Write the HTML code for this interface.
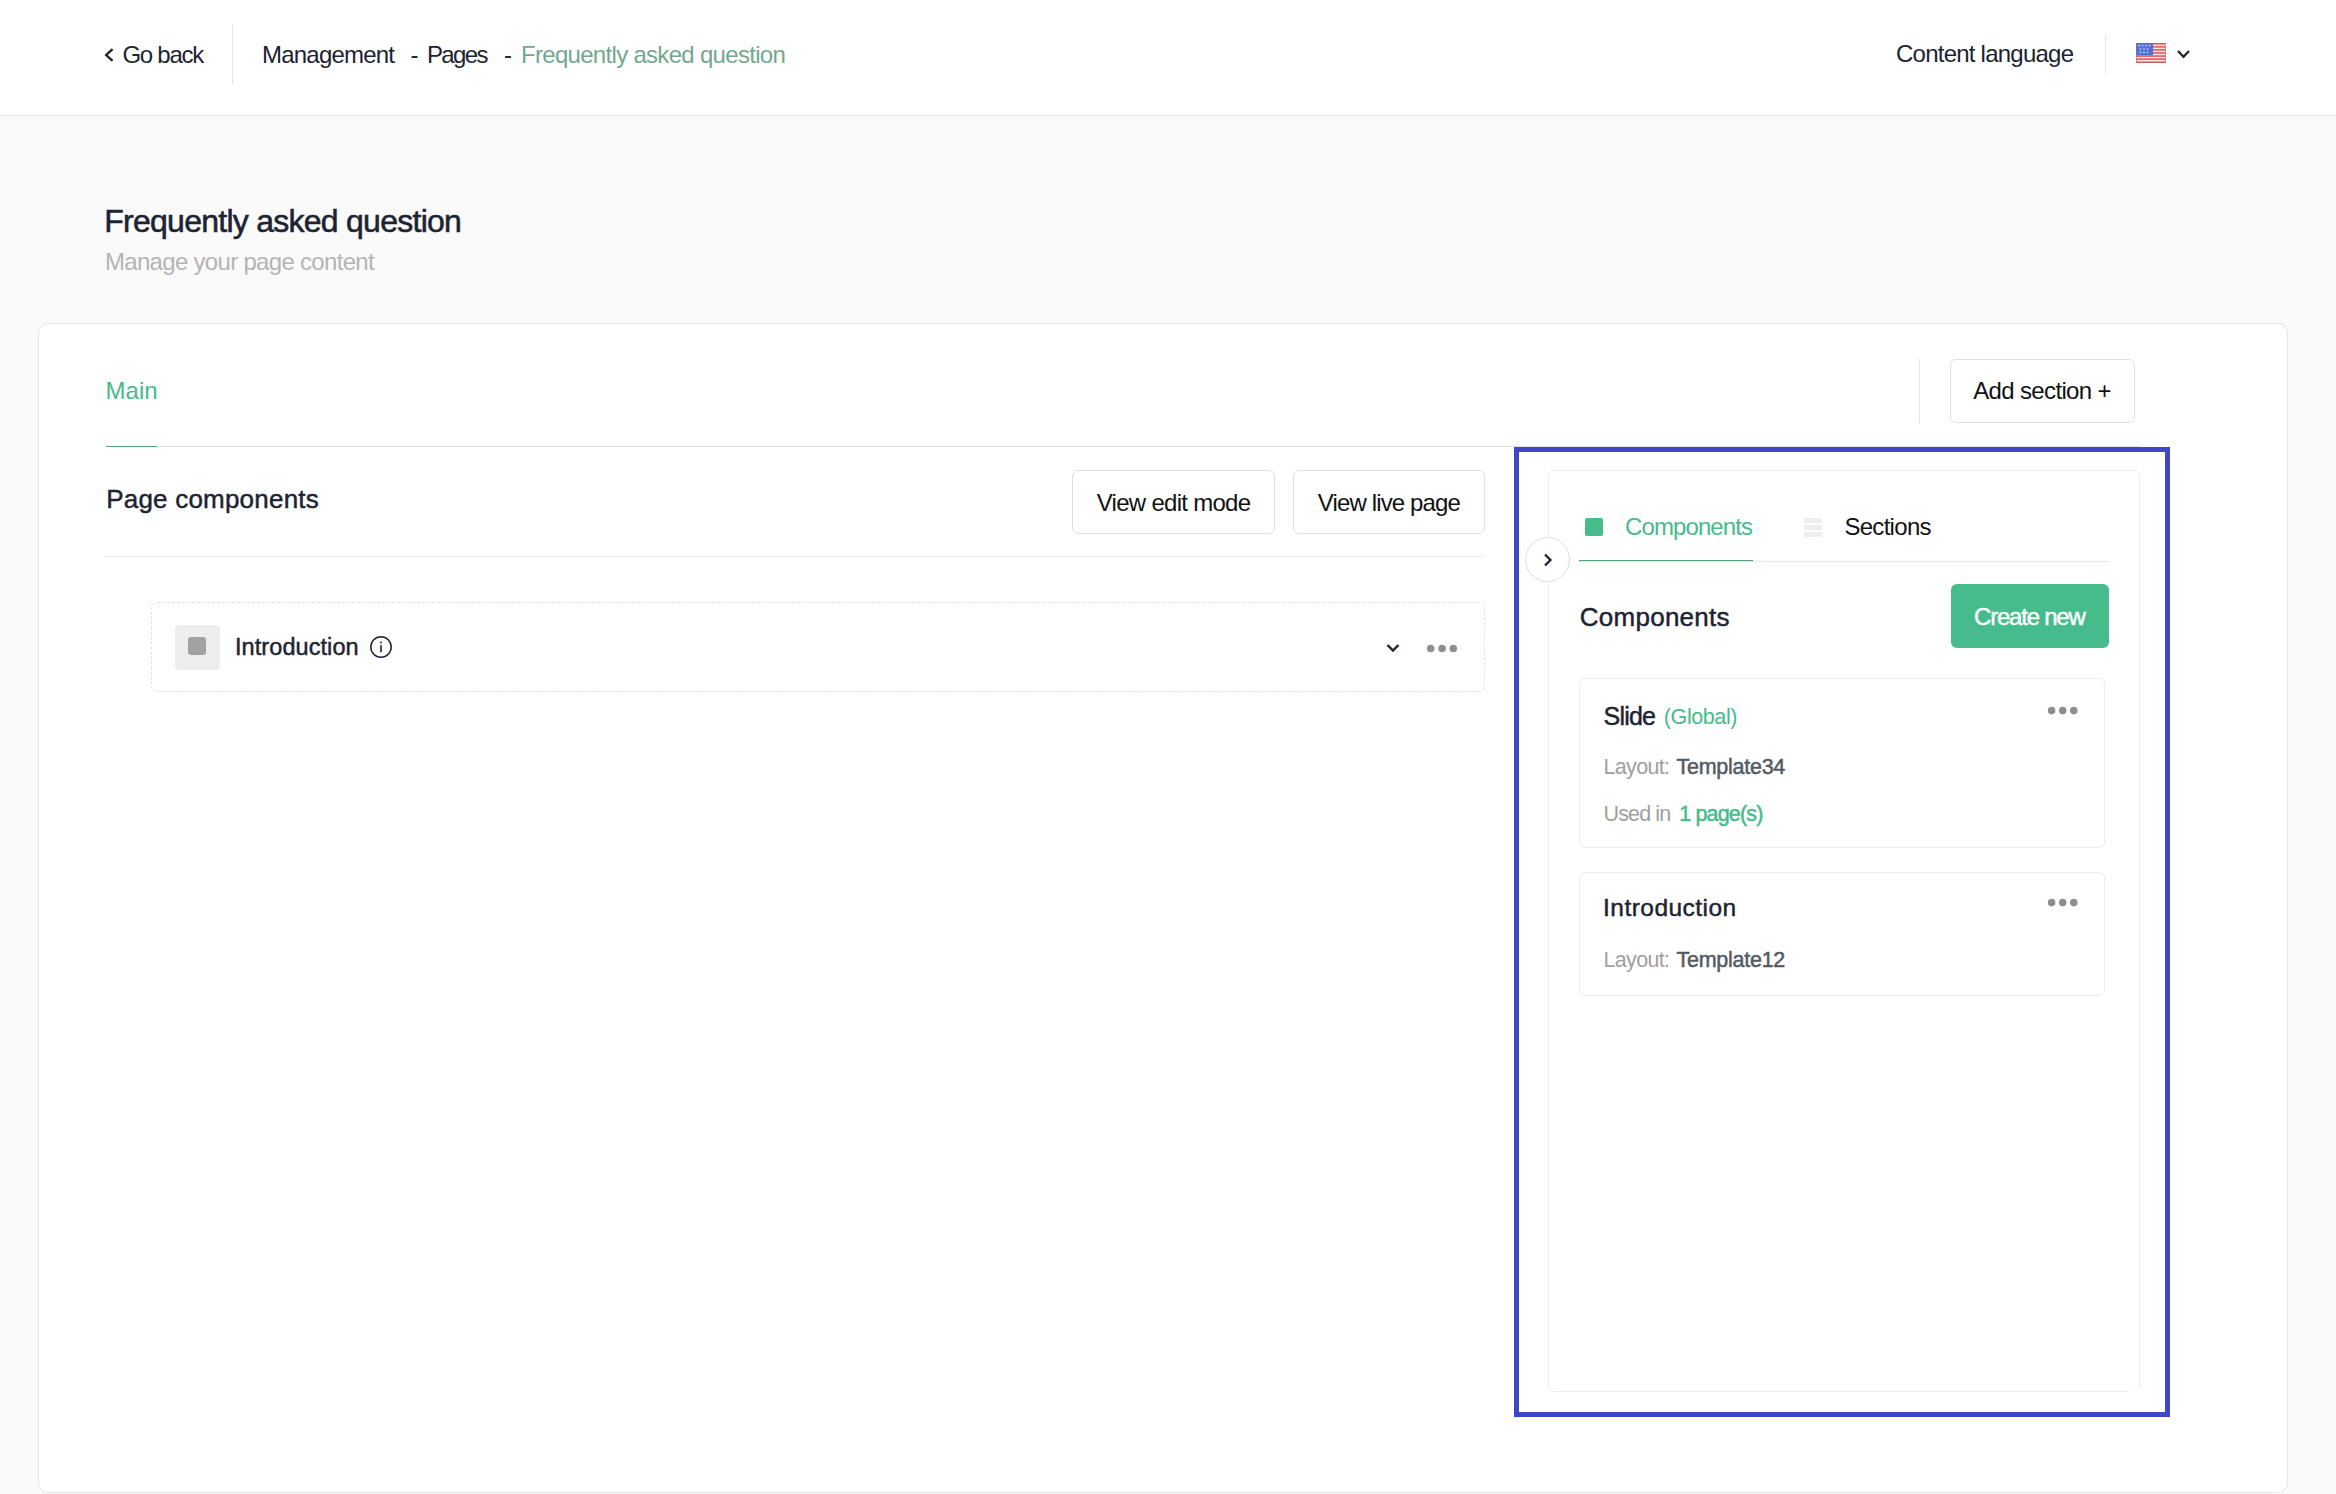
<!DOCTYPE html>
<html><head><meta charset="utf-8">
<style>
html,body{margin:0;padding:0;}
body{width:2336px;height:1494px;overflow:hidden;position:relative;background:#fafafa;font-family:"Liberation Sans",sans-serif;}
.t{position:absolute;white-space:nowrap;}
.a{position:absolute;box-sizing:border-box;}
</style></head><body>
<!-- header -->
<div class="a" style="left:0;top:0;width:2336px;height:116px;background:#fff;border-bottom:1px solid #e4e4e4;"></div>
<svg class="a" style="left:100px;top:44px" width="18" height="22" viewBox="0 0 18 22"><path d="M12.6 5.2 L6.2 11 L12.6 16.8" fill="none" stroke="#1c2331" stroke-width="2.3"/></svg>
<div class="a" style="left:232px;top:24px;width:1px;height:60px;background:#e4e4e4;"></div>
<div class="a" style="left:2105px;top:35px;width:1px;height:38px;background:#e4e4e4;"></div>
<!-- flag -->
<svg class="a" style="left:2136px;top:43px" width="30" height="20" viewBox="0 0 30 20">
<rect x="0" y="0" width="30" height="20" fill="#fbe3e3"/>
<rect x="0" y="0.000" width="30" height="1.538" fill="#dc5a5a"/><rect x="0" y="3.077" width="30" height="1.538" fill="#dc5a5a"/><rect x="0" y="6.154" width="30" height="1.538" fill="#dc5a5a"/><rect x="0" y="9.231" width="30" height="1.538" fill="#dc5a5a"/><rect x="0" y="12.308" width="30" height="1.538" fill="#dc5a5a"/><rect x="0" y="15.385" width="30" height="1.538" fill="#dc5a5a"/><rect x="0" y="18.462" width="30" height="1.538" fill="#dc5a5a"/>
<rect x="0" y="0" width="17" height="12.3" fill="#4f72d6"/>
<circle cx="3" cy="2.5" r="0.85" fill="#cfe0ff"/><circle cx="6.5" cy="2.5" r="0.85" fill="#cfe0ff"/><circle cx="10" cy="2.5" r="0.85" fill="#cfe0ff"/><circle cx="13.5" cy="2.5" r="0.85" fill="#cfe0ff"/><circle cx="4.5" cy="6" r="0.85" fill="#cfe0ff"/><circle cx="8" cy="6" r="0.85" fill="#cfe0ff"/><circle cx="11.5" cy="6" r="0.85" fill="#cfe0ff"/><circle cx="4.5" cy="9.3" r="0.85" fill="#cfe0ff"/><circle cx="8" cy="9.3" r="0.85" fill="#cfe0ff"/><circle cx="11.5" cy="9.3" r="0.85" fill="#cfe0ff"/>
<rect x="0.4" y="0.4" width="29.2" height="19.2" fill="none" stroke="#9b6b6b" stroke-opacity="0.55" stroke-width="0.8"/>
</svg>
<svg class="a" style="left:2175px;top:47px" width="17" height="14" viewBox="0 0 17 14"><path d="M3 4 L8.5 9.8 L14 4" fill="none" stroke="#1c2331" stroke-width="2.2"/></svg>

<!-- main card -->
<div class="a" style="left:38px;top:323px;width:2250px;height:1170px;background:#fff;border:1px solid #e4e4e4;border-radius:10px;"></div>
<div class="a" style="left:106px;top:446px;width:2034px;height:1px;background:#e0e0e0;"></div>
<div class="a" style="left:106px;top:446px;width:51px;height:1px;background:#5a9e80;"></div>
<div class="a" style="left:1919px;top:359px;width:1px;height:64px;background:#e4e4e4;"></div>
<div class="a" style="left:1950px;top:359px;width:185px;height:64px;border:1px solid #e0e0e0;border-radius:6px;background:#fff;"></div>

<!-- page components -->
<div class="a" style="left:1072px;top:470px;width:203px;height:64px;border:1px solid #e0e0e0;border-radius:6px;background:#fff;"></div>
<div class="a" style="left:1293px;top:470px;width:192px;height:64px;border:1px solid #e0e0e0;border-radius:6px;background:#fff;"></div>
<div class="a" style="left:106px;top:556px;width:1379px;height:1px;background:#ececec;"></div>
<div class="a" style="left:151px;top:602px;width:1334px;height:90px;border:1px dashed #e2e2e2;border-radius:6px;"></div>
<div class="a" style="left:175px;top:625px;width:45px;height:45px;background:#ededed;border-radius:4px;"></div>
<div class="a" style="left:188px;top:637px;width:18px;height:18px;background:#a2a2a2;border-radius:3px;"></div>
<svg class="a" style="left:368px;top:634px" width="26" height="26" viewBox="0 0 26 26"><circle cx="13" cy="13" r="10.2" fill="none" stroke="#1c2331" stroke-width="1.5"/><rect x="12.2" y="11.2" width="1.6" height="7" fill="#1c2331"/><rect x="12.2" y="7.6" width="1.6" height="1.8" fill="#1c2331"/></svg>
<svg class="a" style="left:1384px;top:641px" width="18" height="14" viewBox="0 0 18 14"><path d="M3.5 4 L9 9.5 L14.5 4" fill="none" stroke="#1c2331" stroke-width="2.4"/></svg>
<svg class="a" style="left:1424px;top:642px" width="38" height="14" viewBox="0 0 38 14"><circle cx="6.7" cy="6.5" r="3.8" fill="#8f8f8f"/><circle cx="18.1" cy="6.5" r="3.8" fill="#8f8f8f"/><circle cx="29.3" cy="6.5" r="3.8" fill="#8f8f8f"/></svg>

<!-- right panel -->
<div class="a" style="left:1548px;top:470px;width:592px;height:922px;border:1px solid #ececec;border-radius:6px;background:#fff;"></div>
<div class="a" style="left:1525px;top:537px;width:45px;height:45px;border:1px solid #dedede;border-radius:50%;background:#fff;"></div>
<svg class="a" style="left:1538px;top:550px" width="20" height="20" viewBox="0 0 20 20"><path d="M7 4.5 L12.5 10 L7 15.5" fill="none" stroke="#1c2331" stroke-width="2.3"/></svg>
<div class="a" style="left:1584.8px;top:517.8px;width:18.6px;height:18.4px;background:#46bb8b;border-radius:2px;"></div>
<div class="a" style="left:1804px;top:518px;width:18px;height:4.5px;background:#eeeeee;"></div>
<div class="a" style="left:1804px;top:525px;width:18px;height:4.5px;background:#eeeeee;"></div>
<div class="a" style="left:1804px;top:532px;width:18px;height:4.5px;background:#eeeeee;"></div>
<div class="a" style="left:1579px;top:561px;width:530px;height:1px;background:#e6e6e6;"></div>
<div class="a" style="left:1579px;top:560px;width:174px;height:1px;background:#5a9e80;"></div>
<div class="a" style="left:1951px;top:584px;width:158px;height:64px;background:#46bb8b;border-radius:6px;"></div>

<div class="a" style="left:1579px;top:678px;width:526px;height:170px;border:1px solid #ececec;border-radius:6px;background:#fff;"></div>
<svg class="a" style="left:2044px;top:704px" width="38" height="14" viewBox="0 0 38 14"><circle cx="7.6" cy="6.6" r="3.8" fill="#8f8f8f"/><circle cx="18.7" cy="6.6" r="3.8" fill="#8f8f8f"/><circle cx="29.8" cy="6.6" r="3.8" fill="#8f8f8f"/></svg>
<div class="a" style="left:1579px;top:872px;width:526px;height:124px;border:1px solid #ececec;border-radius:6px;background:#fff;"></div>
<svg class="a" style="left:2044px;top:896px" width="38" height="14" viewBox="0 0 38 14"><circle cx="7.6" cy="6.6" r="3.8" fill="#8f8f8f"/><circle cx="18.7" cy="6.6" r="3.8" fill="#8f8f8f"/><circle cx="29.8" cy="6.6" r="3.8" fill="#8f8f8f"/></svg>

<div class="a" style="left:2129px;top:1388px;width:12px;height:5px;background:#fff;"></div>
<div class="t" style="left:122.40px;top:42.50px;font-size:24px;line-height:24px;letter-spacing:-1.250px;color:#1c2331;">Go back</div>
<div class="t" style="left:262.10px;top:42.50px;font-size:24px;line-height:24px;letter-spacing:-0.803px;color:#1c2331;">Management</div>
<div class="t" style="left:410.60px;top:42.50px;font-size:24px;line-height:24px;letter-spacing:0.000px;color:#1c2331;">-</div>
<div class="t" style="left:426.90px;top:42.50px;font-size:24px;line-height:24px;letter-spacing:-1.600px;color:#1c2331;">Pages</div>
<div class="t" style="left:504.00px;top:42.50px;font-size:24px;line-height:24px;letter-spacing:0.000px;color:#1c2331;">-</div>
<div class="t" style="left:521.00px;top:42.50px;font-size:24px;line-height:24px;letter-spacing:-0.696px;color:#73a78f;">Frequently asked question</div>
<div class="t" style="left:1896.00px;top:42.30px;font-size:24px;line-height:24px;letter-spacing:-0.767px;color:#1c2331;">Content language</div>
<div class="t" style="left:104.28px;top:205.00px;font-size:32px;line-height:32px;letter-spacing:-0.739px;color:#1c2331;-webkit-text-stroke:0.55px #1c2331;">Frequently asked question</div>
<div class="t" style="left:105.00px;top:250.40px;font-size:24px;line-height:24px;letter-spacing:-0.691px;color:#b4b4b4;">Manage your page content</div>
<div class="t" style="left:105.60px;top:379.20px;font-size:24px;line-height:24px;letter-spacing:0.000px;color:#46bb8b;">Main</div>
<div class="t" style="left:1973.20px;top:378.60px;font-size:24px;line-height:24px;letter-spacing:-0.644px;color:#111;">Add section +</div>
<div class="t" style="left:106.22px;top:485.70px;font-size:26px;line-height:26px;letter-spacing:0.209px;color:#1c2331;-webkit-text-stroke:0.45px #1c2331;">Page components</div>
<div class="t" style="left:1096.70px;top:490.50px;font-size:24px;line-height:24px;letter-spacing:-0.710px;color:#111;">View edit mode</div>
<div class="t" style="left:1317.70px;top:490.50px;font-size:24px;line-height:24px;letter-spacing:-0.852px;color:#111;">View live page</div>
<div class="t" style="left:235.03px;top:636.25px;font-size:23.5px;line-height:23.5px;letter-spacing:0.073px;color:#1c2331;-webkit-text-stroke:0.45px #1c2331;">Introduction</div>
<div class="t" style="left:1625.00px;top:515.10px;font-size:24px;line-height:24px;letter-spacing:-0.892px;color:#46bb8b;">Components</div>
<div class="t" style="left:1844.40px;top:515.10px;font-size:24px;line-height:24px;letter-spacing:-0.700px;color:#111;">Sections</div>
<div class="t" style="left:1579.82px;top:603.90px;font-size:26px;line-height:26px;letter-spacing:0.253px;color:#1c2331;-webkit-text-stroke:0.45px #1c2331;">Components</div>
<div class="t" style="left:1974.12px;top:604.60px;font-size:24px;line-height:24px;letter-spacing:-1.225px;color:#fff;-webkit-text-stroke:0.45px #fff;">Create new</div>
<div class="t" style="left:1603.62px;top:703.80px;font-size:25px;line-height:25px;letter-spacing:-0.794px;color:#1c2331;-webkit-text-stroke:0.45px #1c2331;">Slide</div>
<div class="t" style="left:1663.80px;top:707.25px;font-size:21.5px;line-height:21.5px;letter-spacing:-0.400px;color:#46bb8b;">(Global)</div>
<div class="t" style="left:1603.60px;top:757.25px;font-size:21.5px;line-height:21.5px;letter-spacing:-0.700px;color:#a0a0a0;">Layout:</div>
<div class="t" style="left:1676.55px;top:757.25px;font-size:21.5px;line-height:21.5px;letter-spacing:-0.269px;color:#545a63;-webkit-text-stroke:0.5px #545a63;">Template34</div>
<div class="t" style="left:1603.60px;top:803.95px;font-size:21.5px;line-height:21.5px;letter-spacing:-0.879px;color:#a0a0a0;">Used in</div>
<div class="t" style="left:1679.15px;top:803.95px;font-size:21.5px;line-height:21.5px;letter-spacing:-0.822px;color:#46bb8b;-webkit-text-stroke:0.5px #46bb8b;">1 page(s)</div>
<div class="t" style="left:1603.02px;top:895.95px;font-size:24.5px;line-height:24.5px;letter-spacing:0.468px;color:#1c2331;-webkit-text-stroke:0.45px #1c2331;">Introduction</div>
<div class="t" style="left:1603.60px;top:949.65px;font-size:21.5px;line-height:21.5px;letter-spacing:-0.700px;color:#a0a0a0;">Layout:</div>
<div class="t" style="left:1676.55px;top:949.65px;font-size:21.5px;line-height:21.5px;letter-spacing:-0.269px;color:#545a63;-webkit-text-stroke:0.5px #545a63;">Template12</div>

<!-- highlight box -->
<div class="a" style="left:1514px;top:447px;width:656px;height:970px;border:5px solid #3f47c7;"></div>
</body></html>
